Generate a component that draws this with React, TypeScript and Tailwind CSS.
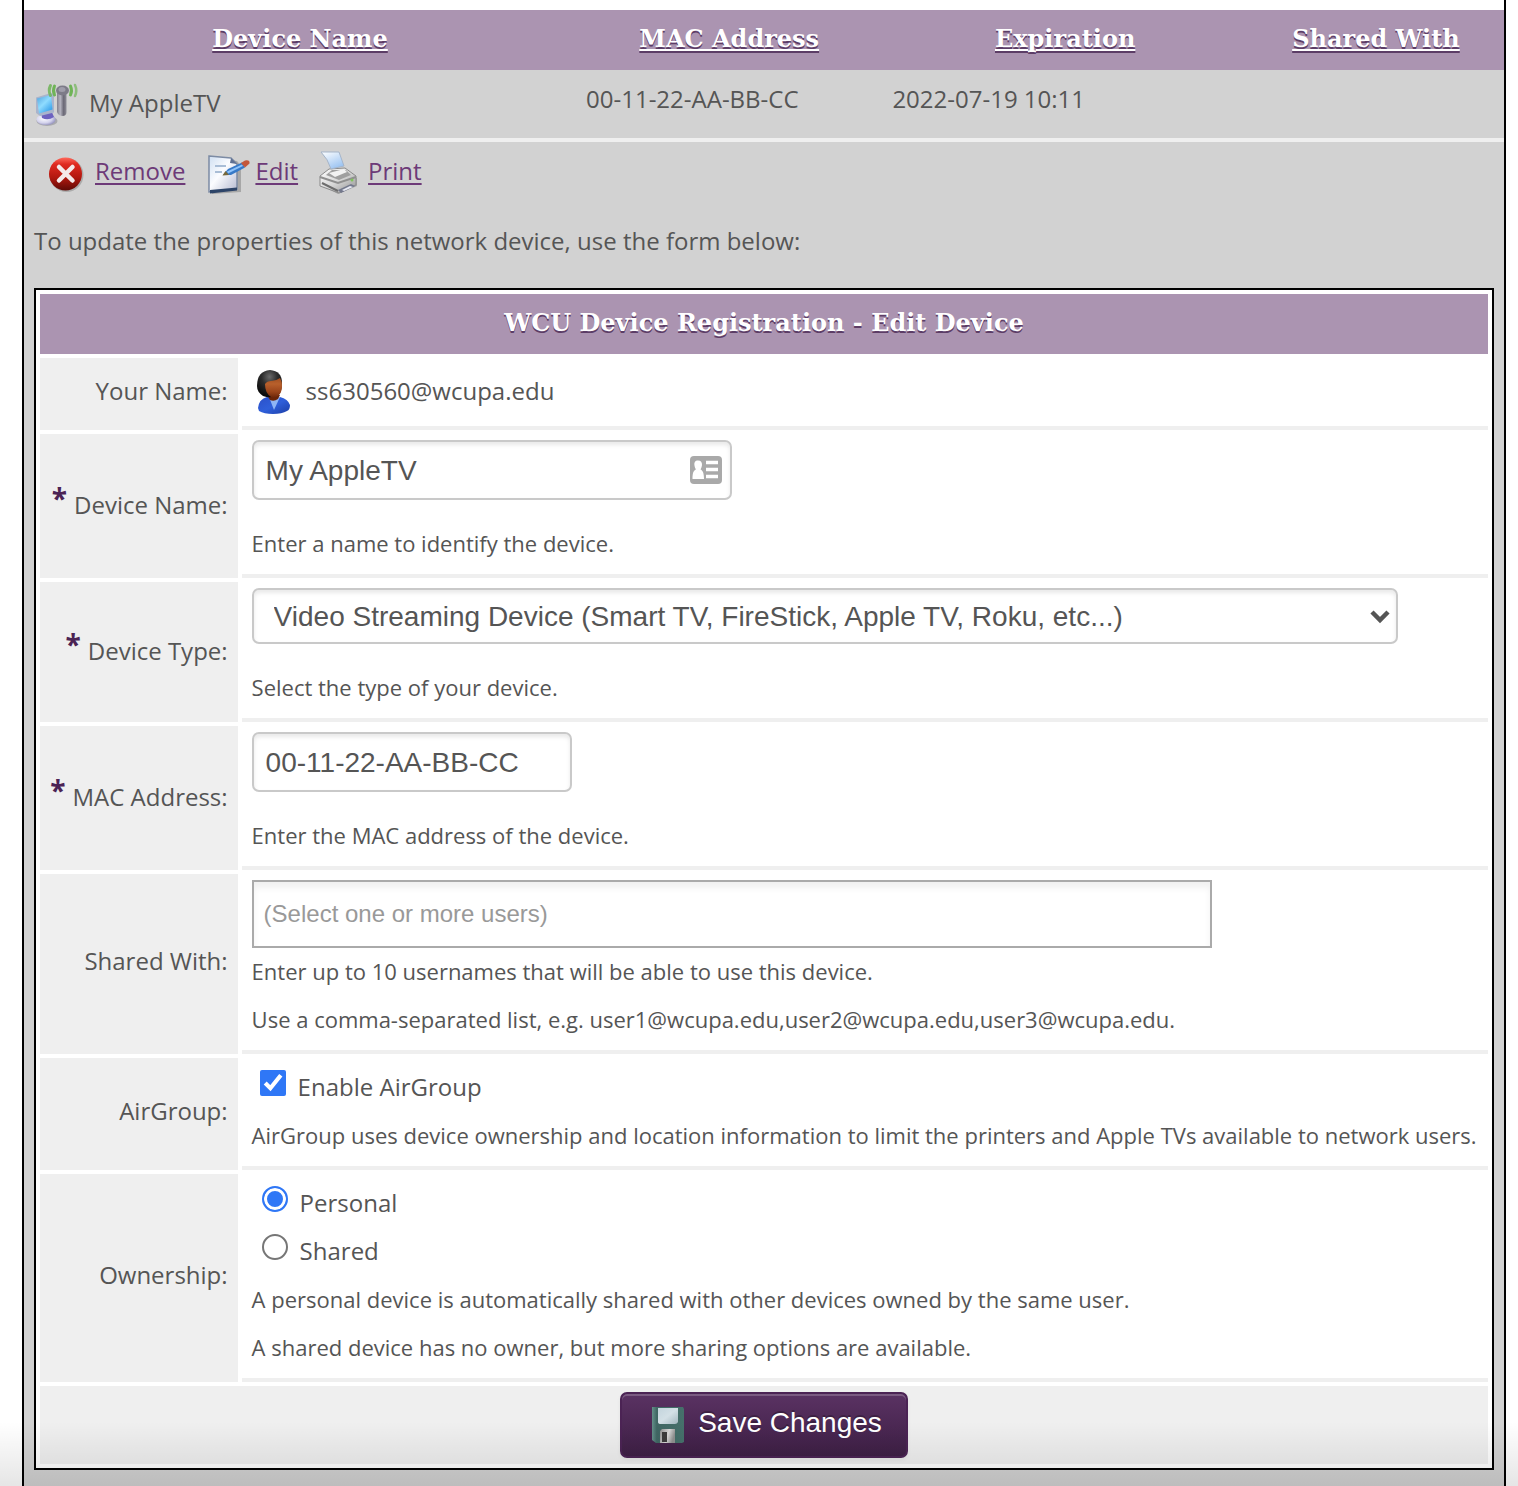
import { useState, type ReactNode } from 'react';

const heading =
  "font-['DejaVu_Serif',serif] text-[24px] leading-[30px] font-bold text-white [text-shadow:0_2px_0_#5c3d66]";
const link =
  'text-[#6d3a78] underline decoration-2 underline-offset-3';
const textBox =
  "block rounded-[7px] border-2 border-[#c9c9c9] bg-white px-3 font-['Liberation_Sans',sans-serif] text-[28px] text-[#555] shadow-[inset_0_3px_4px_rgba(0,0,0,0.09)]";

function DeviceIcon() {
  return (
    <svg className="h-12 w-12 shrink-0" viewBox="0 0 48 48" aria-hidden="true">
      <defs>
        <linearGradient id="dvScreen" x1="0" y1="0" x2="0.8" y2="1">
          <stop offset="0" stopColor="#4f9fdc" />
          <stop offset="0.5" stopColor="#8fdcff" />
          <stop offset="1" stopColor="#2f9be8" />
        </linearGradient>
        <linearGradient id="dvPole" x1="0" y1="0" x2="1" y2="0">
          <stop offset="0" stopColor="#83818e" />
          <stop offset="0.35" stopColor="#b5b4c0" />
          <stop offset="0.7" stopColor="#6a6875" />
          <stop offset="1" stopColor="#8f8e98" />
        </linearGradient>
        <radialGradient id="dvBase" cx="0.4" cy="0.4" r="0.7">
          <stop offset="0" stopColor="#ffffff" />
          <stop offset="0.6" stopColor="#d3d2ec" />
          <stop offset="1" stopColor="#8583b4" />
        </radialGradient>
      </defs>
      <ellipse cx="13" cy="41" rx="10.500" ry="5" fill="#8e8e96" opacity="0.6" />
      <ellipse cx="12" cy="39.500" rx="9.500" ry="5.500" fill="url(#dvBase)" />
      <path d="M7 32l10-2 3 7q-6 4-12 1z" fill="#6d62c0" />
      <path d="M2 17.500L17 13l3 1.500v18L6 36 2 33z" fill="#a9b4cc" />
      <path d="M3 18.500L17 15l1.500 14.500L5 33.500z" fill="url(#dvScreen)" />
      <g fill="none" stroke="#6fb457" strokeLinecap="round">
        <path d="M20.500 6q-2 4.500 0 9" strokeWidth="3" />
        <path d="M16.500 5.500q-2.500 5 0 10" strokeWidth="3" opacity="0.85" />
        <path d="M36.500 6q2 4.500 0 9" strokeWidth="3" />
        <path d="M41 5q2.500 5.500 0 11" strokeWidth="2.500" opacity="0.7" />
      </g>
      <path d="M23 12h9.500v20q0 4-4 4t-5.500-4z" fill="url(#dvPole)" />
      <ellipse cx="28.500" cy="10.500" rx="6.500" ry="5" fill="#7d7b88" />
      <ellipse cx="28" cy="9.500" rx="3.500" ry="2.500" fill="#9f9daa" />
    </svg>
  );
}

function RemoveIcon() {
  return (
    <svg className="h-10 w-9 shrink-0" viewBox="0 0 36 40" aria-hidden="true">
      <defs>
        <linearGradient id="rmFill" x1="0" y1="0" x2="0" y2="1">
          <stop offset="0" stopColor="#ff6a5c" />
          <stop offset="0.2" stopColor="#e02a20" />
          <stop offset="0.6" stopColor="#b3180f" />
          <stop offset="1" stopColor="#5e0a06" />
        </linearGradient>
      </defs>
      <circle cx="18.500" cy="23" r="17" fill="#7d7d7d" opacity="0.45" />
      <circle cx="17.500" cy="22" r="16.500" fill="url(#rmFill)" />
      <path d="M11 15l13.500 13.500M24.500 15L11 28.500" stroke="#f4eaea" strokeWidth="4.500" strokeLinecap="round" />
    </svg>
  );
}

function EditIcon() {
  return (
    <svg className="h-11 w-11 shrink-0" viewBox="0 0 44 44" aria-hidden="true">
      <defs>
        <linearGradient id="edPage" x1="0" y1="0" x2="1" y2="1">
          <stop offset="0" stopColor="#cfdff2" />
          <stop offset="0.45" stopColor="#fbfcff" />
          <stop offset="1" stopColor="#b4b9d0" />
        </linearGradient>
      </defs>
      <path d="M5 8l25 3 4 5v26L5 44z" fill="#666" opacity="0.4" />
      <path d="M2 6l22 2 6 6v25L2 42z" fill="url(#edPage)" stroke="#7c8ba4" strokeWidth="1.500" />
      <path d="M3 40l27-2.500v3L3 43.500z" fill="#2d4468" />
      <path d="M24 8l6 6-7-1z" fill="#5f7193" />
      <path d="M8 16h11M8 22h7" stroke="#a9bdd6" strokeWidth="2" />
      <path d="M16 25l5-6 14-6.500 3 5-14 7.500z" fill="#3679c8" />
      <path d="M20 21.500l15-7 1 1.500-15 7.500z" fill="#8dc2fa" />
      <path d="M34 13l4-2.500q5-1 4.500 3L38 17.500z" fill="#c4573a" />
      <path d="M15.500 25.500l3-4.500 3.500 4z" fill="#77683a" />
    </svg>
  );
}

function PrintIcon() {
  return (
    <svg className="h-11 w-10 shrink-0" viewBox="0 0 40 44" aria-hidden="true">
      <defs>
        <linearGradient id="prPaper" x1="0" y1="0" x2="0.6" y2="1">
          <stop offset="0" stopColor="#ffffff" />
          <stop offset="1" stopColor="#9cc4f2" />
        </linearGradient>
        <linearGradient id="prBody" x1="0" y1="0" x2="1" y2="1">
          <stop offset="0" stopColor="#ffffff" />
          <stop offset="0.5" stopColor="#d8d8d8" />
          <stop offset="1" stopColor="#8e8e8e" />
        </linearGradient>
      </defs>
      <path d="M3 35l17 9 19-8v-8z" fill="#777" opacity="0.5" />
      <path d="M2 26l9-7 16-1 11 8v9l-17 8L2 36z" fill="url(#prBody)" stroke="#8b8b8b" />
      <path d="M2 27l18 6 18-6" fill="none" stroke="#8f8f8f" strokeWidth="2" />
      <path d="M8 25l6-5h14l5 5-12 5z" fill="#9f9f9f" />
      <path d="M3 2h18l5 14-13 3Q10 9 3 2z" fill="url(#prPaper)" stroke="#a5b5ca" />
      <path d="M11 23l15-4 3 3-12 5z" fill="#f2f2f2" />
      <path d="M4 33l16 8" stroke="#6d6d6d" strokeWidth="2" />
      <path d="M20 40l13-6 4 2-14 7z" fill="#73788c" />
      <path d="M24 40l8-4 3 1-9 4z" fill="#e8eaf4" />
      <circle cx="34" cy="30" r="1.500" fill="#7fc35a" />
    </svg>
  );
}

function UserIcon() {
  return (
    <svg className="h-11 w-9 shrink-0" viewBox="0 0 36 44" aria-hidden="true">
      <defs>
        <radialGradient id="usHair" cx="0.5" cy="0.25" r="0.7">
          <stop offset="0" stopColor="#6a6a6a" />
          <stop offset="0.45" stopColor="#2c2c2c" />
          <stop offset="1" stopColor="#0a0a0a" />
        </radialGradient>
        <linearGradient id="usFace" x1="0" y1="0" x2="0" y2="1">
          <stop offset="0" stopColor="#a04e20" />
          <stop offset="0.3" stopColor="#b8602c" />
          <stop offset="0.7" stopColor="#9a441a" />
          <stop offset="1" stopColor="#6a2509" />
        </linearGradient>
        <linearGradient id="usCoat" x1="0" y1="0" x2="1" y2="1">
          <stop offset="0" stopColor="#2c50c8" />
          <stop offset="0.5" stopColor="#2f5fda" />
          <stop offset="1" stopColor="#1c3ea6" />
        </linearGradient>
      </defs>
      <path d="M2 38Q3 29 11 27h13q8 2 10 8 0 5-3 6-5 3-14 3-9 0-14-3z" fill="url(#usCoat)" />
      <path d="M13 27l5 13 6-13z" fill="#8fb5f5" />
      <path d="M11 25h13l-2 4q-4 3-8 1z" fill="#6a2509" />
      <path d="M1 16Q1 1 14 0q12 1 12 13 0 9-4 12-7 4-15 1-6-4-6-10z" fill="url(#usHair)" />
      <path d="M9 14q2-3 6-3 5 0 9-3 2 3 2 8 0 7-4 10-4 3-7 1-6-4-6-13z" fill="url(#usFace)" />
    </svg>
  );
}

function ContactCardIcon() {
  return (
    <svg className="h-7 w-8" viewBox="0 0 32 28" aria-hidden="true">
      <rect width="32" height="28" rx="4" fill="#a9a9a9" />
      <path d="M8 4.500c3 0 4.200 2 4 4.500-.2 2-.8 3-1.500 4.500 2 .8 3.500 3 3.500 9.500H2.500c0-6.500 1.300-8.700 3.500-9.500-.8-1.500-1.400-2.500-1.600-4.500-.2-2.500.6-4.500 3.600-4.500z" fill="#fff" />
      <path d="M16 6.500h12M16 13.500h12M16 20.500h12" stroke="#fff" strokeWidth="3.500" />
    </svg>
  );
}

function FloppyIcon() {
  return (
    <svg className="h-10 w-9 shrink-0" viewBox="0 0 36 40" aria-hidden="true">
      <defs>
        <linearGradient id="flBody" x1="0" y1="0" x2="1" y2="0">
          <stop offset="0" stopColor="#64908a" />
          <stop offset="0.15" stopColor="#3f6663" />
          <stop offset="1" stopColor="#46706b" />
        </linearGradient>
        <linearGradient id="flLabel" x1="0" y1="0" x2="1" y2="1">
          <stop offset="0" stopColor="#c3d4dd" />
          <stop offset="0.5" stopColor="#d3e0e6" />
          <stop offset="1" stopColor="#a3b7bf" />
        </linearGradient>
        <linearGradient id="flMetal" x1="0" y1="0" x2="1" y2="0.300">
          <stop offset="0" stopColor="#8c8c8c" />
          <stop offset="0.6" stopColor="#d8d8d8" />
          <stop offset="1" stopColor="#8f8f8f" />
        </linearGradient>
      </defs>
      <path d="M2 2h31l1 2v33l-2 1H6l-4-3z" fill="url(#flBody)" />
      <path d="M8 3h20v14q-1 2-3 2H11q-3 0-3-2z" fill="url(#flLabel)" />
      <path d="M10 26l2-2h13v14H10z" fill="url(#flMetal)" />
      <path d="M12 27h5v10h-5z" fill="#3c3c3c" />
    </svg>
  );
}

function Help({ children }: { children: ReactNode }) {
  return <p className="pb-0.5 text-[22px] leading-[46px]">{children}</p>;
}

function Row({ label, htmlFor, required, children }: { label: string; htmlFor?: string; required?: boolean; children: ReactNode }) {
  return (
    <tr>
      <th
        scope="row"
        className={`bg-[#efefef] px-2.5 text-right align-middle leading-12 font-normal whitespace-nowrap ${required ? 'pb-0.5' : 'pb-1.5'}`}
      >
        {required && <span className="mr-[7px] align-[5px] text-[28px] leading-6 font-bold text-[#4b2354]">*</span>}
        {htmlFor ? <label htmlFor={htmlFor}>{label}</label> : label}
      </th>
      <td className="border-b-4 border-[#efefef] px-2.5 py-1.5">{children}</td>
    </tr>
  );
}

export default function App() {
  const [name, setName] = useState('My AppleTV');
  const [mac, setMac] = useState('00-11-22-AA-BB-CC');
  const [airgroup, setAirgroup] = useState(true);
  const [owner, setOwner] = useState('Personal');

  return (
    <div className="relative bg-white pr-3 pl-[22px] font-['Open_Sans',sans-serif] text-[24px] text-[#555]">
      <main className="border-x-2 border-black pt-2.5">
        <div className="bg-[#d2d2d2]">
          <table className="w-full table-fixed border-collapse">
            <colgroup>
              <col className="w-[37.3%]" />
              <col className="w-[20.7%]" />
              <col className="w-[24.7%]" />
              <col className="w-[17.3%]" />
            </colgroup>
            <thead>
              <tr className="h-15 bg-[#ab94b1]">
                {['Device Name', 'MAC Address', 'Expiration', 'Shared With'].map((t) => (
                  <th key={t} scope="col" className={`pb-0.5 ${heading}`}>
                    <a href="#sort" className="underline decoration-2 underline-offset-2">{t}</a>
                  </th>
                ))}
              </tr>
            </thead>
            <tbody>
              <tr className="border-b-4 border-[#efefef] align-top leading-[46px]">
                <td className="px-2.5 py-1.5">
                  <div className="flex h-14 items-center gap-[7px]">
                    <DeviceIcon />
                    <span className="pb-0.5">My AppleTV</span>
                  </div>
                </td>
                <td className="px-2.5 py-1.5">00-11-22-AA-BB-CC</td>
                <td className="px-2.5 py-1.5">2022-07-19 10:11</td>
                <td />
              </tr>
            </tbody>
          </table>

          <div className="px-2.5 pt-1.5 pb-4">
            <nav className="flex h-12 items-center pl-3.5 leading-[46px]">
              <a href="#remove" className="flex items-center gap-[11px]">
                <RemoveIcon />
                <span className={`pb-0.5 ${link}`}>Remove</span>
              </a>
              <a href="#edit" className="ml-[22px] flex items-center gap-1">
                <EditIcon />
                <span className={`pb-0.5 ${link}`}>Edit</span>
              </a>
              <a href="#print" className="ml-5 flex items-center gap-2.5">
                <PrintIcon />
                <span className={`pb-0.5 ${link}`}>Print</span>
              </a>
            </nav>
            <p className="mt-[22px] mb-6 leading-[46px]">
              To update the properties of this network device, use the form below:
            </p>

            <form onSubmit={(e) => e.preventDefault()}>
              <table className="w-full border-separate border-spacing-1 border-2 border-black bg-white">
                <thead>
                  <tr>
                    <th colSpan={2} className={`h-15 bg-[#ab94b1] pb-0.5 ${heading}`}>
                      WCU Device Registration - Edit Device
                    </th>
                  </tr>
                </thead>
                <tbody>
                  <Row label="Your Name:">
                    <div className="flex h-14 items-center gap-3.5 pl-1">
                      <UserIcon />
                      <span className="pb-0.5">ss630560@wcupa.edu</span>
                    </div>
                  </Row>
                  <Row label="Device Name:" htmlFor="name" required>
                    <div className="relative mb-5 w-[480px]">
                      <input id="name" className={`${textBox} h-15 w-full pt-0.5`} value={name} onChange={(e) => setName(e.target.value)} />
                      <span className="absolute top-4 right-2.5">
                        <ContactCardIcon />
                      </span>
                    </div>
                    <Help>Enter a name to identify the device.</Help>
                  </Row>
                  <Row label="Device Type:" htmlFor="type" required>
                    <div className="relative mb-5 w-[1146px] max-w-full">
                      <select id="type" className={`${textBox} h-14 w-full appearance-none pt-0.5 pl-5`}>
                        <option>Video Streaming Device (Smart TV, FireStick, Apple TV, Roku, etc...)</option>
                      </select>
                      <svg className="pointer-events-none absolute top-5 right-2 h-4 w-5" viewBox="0 0 20 16" aria-hidden="true">
                        <path d="M2 4l8 8 8-8" fill="none" stroke="#555" strokeWidth="4.500" />
                      </svg>
                    </div>
                    <Help>Select the type of your device.</Help>
                  </Row>
                  <Row label="MAC Address:" htmlFor="mac" required>
                    <input id="mac" className={`${textBox} mb-5 h-15 w-80 pt-0.5`} value={mac} onChange={(e) => setMac(e.target.value)} />
                    <Help>Enter the MAC address of the device.</Help>
                  </Row>
                  <Row label="Shared With:" htmlFor="shared">
                    <input
                      id="shared"
                      placeholder="(Select one or more users)"
                      className="block h-17 w-[960px] max-w-full border-2 border-[#aaa] bg-white px-2.5 font-['Liberation_Sans',sans-serif] text-[24px] shadow-[inset_0_6px_6px_rgba(0,0,0,0.06)] placeholder:text-[#999]"
                    />
                    <Help>Enter up to 10 usernames that will be able to use this device.</Help>
                    <Help>Use a comma-separated list, e.g. user1@wcupa.edu,user2@wcupa.edu,user3@wcupa.edu.</Help>
                  </Row>
                  <Row label="AirGroup:">
                    <label className="flex h-12 items-start gap-3 pl-2 leading-[46px]">
                      <input type="checkbox" checked={airgroup} onChange={(e) => setAirgroup(e.target.checked)} className="mt-1.5 h-[26px] w-[26px] accent-[#2f77f6]" />
                      Enable AirGroup
                    </label>
                    <Help>AirGroup uses device ownership and location information to limit the printers and Apple TVs available to network users.</Help>
                  </Row>
                  <Row label="Ownership:">
                    {['Personal', 'Shared'].map((o) => (
                      <label key={o} className="flex h-12 items-start gap-3 pl-2.5 leading-[46px]">
                        <input
                          type="radio"
                          name="owner"
                          checked={owner === o}
                          onChange={() => setOwner(o)}
                          className="mt-1.5 h-[26px] w-[26px] appearance-none rounded-full border-2 border-[#767676] bg-white checked:border-[#2f77f6] checked:bg-[#2f77f6] checked:shadow-[inset_0_0_0_3px_#fff]"
                        />
                        {o}
                      </label>
                    ))}
                    <Help>A personal device is automatically shared with other devices owned by the same user.</Help>
                    <Help>A shared device has no owner, but more sharing options are available.</Help>
                  </Row>
                  <tr>
                    <td colSpan={2} className="bg-[#efefef] py-1.5">
                      <button
                        type="submit"
                        className="mx-auto flex h-[66px] w-72 items-center justify-center gap-3 rounded-[7px] border-2 border-[#4b2354] bg-linear-to-b from-[#5a3263] to-[#3e1f45] pl-1 font-['Liberation_Sans',sans-serif] text-[28px] text-white shadow-[inset_0_2px_0_rgba(255,255,255,0.2),0_2px_4px_rgba(0,0,0,0.05)] [text-shadow:0_-2px_0_rgba(0,0,0,0.25)]"
                      >
                        <FloppyIcon />
                        <span className="pb-1">Save Changes</span>
                      </button>
                    </td>
                  </tr>
                </tbody>
              </table>
            </form>
          </div>
        </div>
      </main>
      <div className="pointer-events-none absolute inset-x-0 bottom-0 h-16 bg-linear-to-b from-transparent to-black/10" />
    </div>
  );
}
